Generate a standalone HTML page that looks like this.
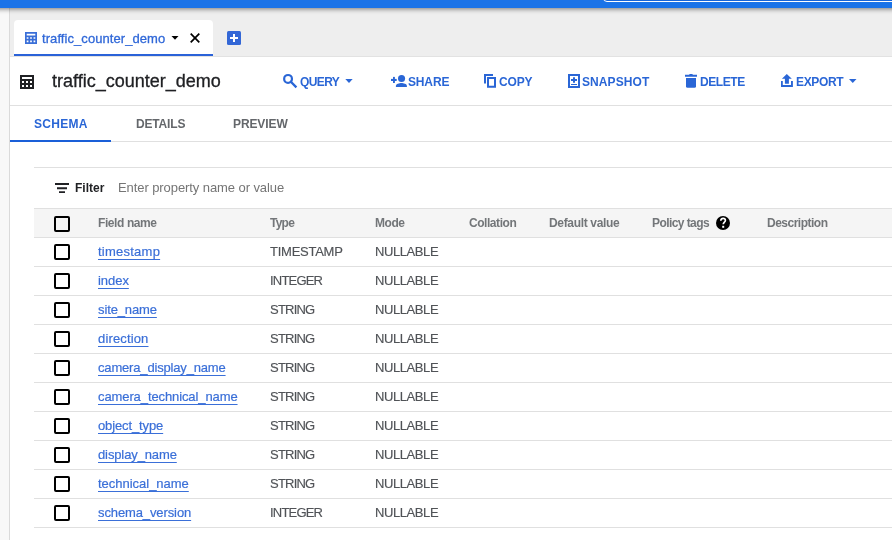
<!DOCTYPE html>
<html><head><meta charset="utf-8">
<style>
*{box-sizing:border-box;margin:0;padding:0}
html,body{width:892px;height:540px;overflow:hidden;background:#fff;font-family:"Liberation Sans",sans-serif;position:relative}
.t{will-change:transform}
.a{position:absolute}
.t{position:absolute;white-space:nowrap;line-height:1}
#topbar{left:-20px;top:0;width:940px;height:8px;background:#1a73e8;z-index:5;box-shadow:0 1px 5px rgba(0,0,0,.5)}
#search{left:623px;top:-30px;width:330px;height:32px;border:1px solid #fff;border-radius:4px;background:#1765d8}
#leftstrip{left:0;top:0;width:10px;height:540px;background:#f8f8f8;border-right:1px solid #dadada}
#tabbar{left:10px;top:8px;width:882px;height:49px;background:#eeeeee;border-bottom:1px solid #e2e2e2}
#tab{left:14px;top:20px;width:199px;height:36px;background:#fff;border-radius:4px 4px 0 0;border-bottom:2px solid #2a62d8}
.tabtxt{color:#3068d8;font-size:13px;-webkit-text-stroke:0.3px #3068d8;letter-spacing:0.07px}
.title{font-size:18px;color:#202124;-webkit-text-stroke:0.3px #202124}
.btn{color:#2a66d6;font-size:12px;font-weight:bold}
.hl{position:absolute;height:1px;background:#e0e0e0}
.stab{font-size:12px;font-weight:bold;color:#64676b}
.th{font-size:12px;font-weight:bold;color:#737679}
.cell{font-size:13px;color:#505357;-webkit-text-stroke:0.15px #505357}
.link{font-size:13px;color:#3a6fd8;text-decoration:underline;text-decoration-skip-ink:none;text-underline-offset:3px;-webkit-text-stroke:0.2px #3a6fd8}
.cb{position:absolute;width:16px;height:16px;border:2px solid #000;border-radius:2px}
svg{position:absolute;overflow:visible}
</style></head><body>
<div id="leftstrip" class="a"></div>
<div id="tabbar" class="a"></div>
<div id="topbar" class="a"><div id="search" class="a"></div></div>
<div id="tab" class="a"></div>

<svg style="left:25px;top:32px" width="12" height="12" viewBox="0 0 14 14"><path fill="#3a6fd8" fill-rule="evenodd" d="M0 0H14V14H0ZM2 2h10v2h-10ZM2 6h2v2h-2ZM6 6h2v2h-2ZM10 6h2v2h-2ZM2 10h2v2h-2ZM6 10h2v2h-2ZM10 10h2v2h-2Z"/></svg>
<div class="t tabtxt" style="left:42px;top:31.5px">traffic_counter_demo</div>
<svg style="left:171px;top:35.5px" width="8" height="4" viewBox="0 0 8 4"><path d="M0.5 0H7.5L4 3.8Z" fill="#000"/></svg>
<svg style="left:190px;top:33px" width="10" height="10" viewBox="0 0 10 10"><path d="M0.7 0.7L9.3 9.3M9.3 0.7L0.7 9.3" stroke="#000" stroke-width="1.7"/></svg>
<div class="a" style="left:227px;top:31px;width:14px;height:14px;background:#3367d6;border-radius:1.5px"></div>
<div class="a" style="left:230px;top:37px;width:8px;height:2px;background:#fff"></div>
<div class="a" style="left:233px;top:34px;width:2px;height:8px;background:#fff"></div>
<svg style="left:20px;top:75px" width="14" height="14" viewBox="0 0 14 14"><path fill="#202124" fill-rule="evenodd" d="M0 0H14V14H0ZM2 2h10v2h-10ZM2 6h2v2h-2ZM6 6h2v2h-2ZM10 6h2v2h-2ZM2 10h2v2h-2ZM6 10h2v2h-2ZM10 10h2v2h-2Z"/></svg>
<div class="t title" style="left:52px;top:71.5px">traffic_counter_demo</div>
<svg style="left:280px;top:70px" width="20" height="20" viewBox="0 0 20 20"><circle cx="8.05" cy="8.9" r="3.9" fill="none" stroke="#2a66d6" stroke-width="2.2"/><path d="M10.9 11.8L15.6 16.5" stroke="#2a66d6" stroke-width="2.3" stroke-linecap="square"/></svg>
<div class="t btn" style="left:299.5px;top:75.8px;letter-spacing:-0.6px">QUERY</div>
<svg style="left:345px;top:79px" width="8" height="4" viewBox="0 0 8 4"><path d="M0.3 0H7.7L4 4Z" fill="#2a66d6"/></svg>
<svg style="left:388px;top:70px" width="22" height="22" viewBox="0 0 22 22"><rect x="3" y="8.9" width="5.7" height="2.1" fill="#2a66d6"/><rect x="5" y="6.9" width="1.9" height="6.1" fill="#2a66d6"/><circle cx="13.55" cy="8.45" r="3.55" fill="#2a66d6"/><path d="M7.9 16.9V15.9C7.9 13.9 11.4 13 13.4 13C15.4 13 18.9 13.9 18.9 15.9V16.9Z" fill="#2a66d6"/></svg>
<div class="t btn" style="left:407.5px;top:75.8px;letter-spacing:-0.15px">SHARE</div>
<svg style="left:484px;top:74px" width="12" height="14" viewBox="0 0 12 14"><path fill="#2a66d6" d="M0 0H9V2H2V9.5H0Z"/><path fill="#2a66d6" fill-rule="evenodd" d="M3 3H12V13.7H3ZM5 5V11.7H10V5Z"/></svg>
<div class="t btn" style="left:499.4px;top:75.8px;letter-spacing:-0.13px">COPY</div>
<svg style="left:568px;top:74px" width="12" height="14" viewBox="0 0 12 14"><path fill="#2a66d6" fill-rule="evenodd" d="M0 0H12V14H0ZM2 2V12H10V2Z"/><path fill="#2a66d6" d="M5 3.2H7V5H9V7H7V8.8H5V7H3V5H5Z"/><rect x="3" y="10" width="6" height="1" fill="#2a66d6"/></svg>
<div class="t btn" style="left:582.2px;top:75.8px;letter-spacing:0.08px">SNAPSHOT</div>
<svg style="left:680px;top:70px" width="20" height="20" viewBox="0 0 20 20"><path fill="#2a66d6" d="M5 4.8H9L9.8 3.9H12.2L13 4.8H17V6.8H5Z"/><path fill="#2a66d6" d="M6 7.9H16V16.3Q16 17.8 14.5 17.8H7.5Q6 17.8 6 16.3Z"/></svg>
<div class="t btn" style="left:699.6px;top:75.8px;letter-spacing:-0.44px">DELETE</div>
<svg style="left:781px;top:74px" width="12" height="13" viewBox="0 0 12 13"><path fill="#2a66d6" d="M5.8 0L10.8 4.8H7.9V9.8H3.9V4.8H0.9Z"/><path fill="#2a66d6" d="M0 7H1.8V11H10V7H11.9V12.9H0Z"/></svg>
<div class="t btn" style="left:795.6px;top:75.8px;letter-spacing:-0.34px">EXPORT</div>
<svg style="left:849.4px;top:79px" width="8" height="4" viewBox="0 0 8 4"><path d="M0 0H7.5L3.75 4Z" fill="#2a66d6"/></svg>
<div class="hl" style="left:10px;top:105px;width:882px"></div>
<div class="t stab" style="left:34.3px;top:117.5px;color:#2a66d6;letter-spacing:0.3px">SCHEMA</div>
<div class="t stab" style="left:135.8px;top:117.5px;letter-spacing:-0.17px">DETAILS</div>
<div class="t stab" style="left:233.4px;top:117.5px;letter-spacing:-0.1px">PREVIEW</div>
<div class="hl" style="left:10px;top:141px;width:882px"></div>
<div class="a" style="left:10px;top:140px;width:101px;height:2px;background:#1a5fd8"></div>
<div class="hl" style="left:34px;top:167px;width:858px"></div>
<svg style="left:55px;top:183px" width="14" height="10" viewBox="0 0 14 10"><path fill="#202124" d="M0 0H14V2H0ZM2 4.3H12V6.3H2ZM4 8.3H10V10H4Z"/></svg>
<div class="t" style="left:74.9px;top:182px;font-size:12px;font-weight:bold;color:#202124">Filter</div>
<div class="t" style="left:117.9px;top:181px;font-size:13px;color:#757575;letter-spacing:-0.08px">Enter property name or value</div>
<div class="a" style="left:34px;top:208px;width:858px;height:30px;background:#f5f5f5;border-top:1px solid #e0e0e0;border-bottom:1px solid #e0e0e0"></div>
<div class="cb" style="left:54px;top:216px"></div>
<div class="t th" style="left:97.60000000000001px;top:216.6px;letter-spacing:-0.41px">Field name</div>
<div class="t th" style="left:270.0px;top:216.6px;letter-spacing:-0.77px">Type</div>
<div class="t th" style="left:374.9px;top:216.6px;letter-spacing:-0.47px">Mode</div>
<div class="t th" style="left:469.3px;top:216.6px;letter-spacing:-0.45px">Collation</div>
<div class="t th" style="left:549.0px;top:216.6px;letter-spacing:-0.33px">Default value</div>
<div class="t th" style="left:651.5px;top:216.6px;letter-spacing:-0.57px">Policy tags</div>
<div class="t th" style="left:767.0px;top:216.6px;letter-spacing:-0.5px">Description</div>
<svg style="left:714px;top:214px" width="18" height="18" viewBox="0 0 18 18"><circle cx="9" cy="9" r="7" fill="#000"/><path d="M6.8 6.7C6.8 5.2 7.9 4.3 9.1 4.3C10.4 4.3 11.4 5.2 11.4 6.4C11.4 7.9 9.2 8.3 9.2 10.3" stroke="#fff" stroke-width="1.65" fill="none"/><rect x="8.2" y="11.8" width="2" height="2" fill="#fff"/></svg>
<div class="hl" style="left:34px;top:266px;width:858px"></div>
<div class="cb" style="left:54px;top:244px"></div>
<div class="t link" style="left:98px;top:245px;letter-spacing:0.24px">timestamp</div>
<div class="t cell" style="left:269.6px;top:245px;letter-spacing:-0.25px">TIMESTAMP</div>
<div class="t cell" style="left:374.5px;top:245px;letter-spacing:-0.41px">NULLABLE</div>
<div class="hl" style="left:34px;top:295px;width:858px"></div>
<div class="cb" style="left:54px;top:273px"></div>
<div class="t link" style="left:98px;top:274px;letter-spacing:-0.05px">index</div>
<div class="t cell" style="left:269.6px;top:274px;letter-spacing:-0.8px">INTEGER</div>
<div class="t cell" style="left:374.5px;top:274px;letter-spacing:-0.41px">NULLABLE</div>
<div class="hl" style="left:34px;top:324px;width:858px"></div>
<div class="cb" style="left:54px;top:302px"></div>
<div class="t link" style="left:98px;top:303px;letter-spacing:-0.125px">site_name</div>
<div class="t cell" style="left:269.6px;top:303px;letter-spacing:-0.78px">STRING</div>
<div class="t cell" style="left:374.5px;top:303px;letter-spacing:-0.41px">NULLABLE</div>
<div class="hl" style="left:34px;top:353px;width:858px"></div>
<div class="cb" style="left:54px;top:331px"></div>
<div class="t link" style="left:98px;top:332px;letter-spacing:0.15px">direction</div>
<div class="t cell" style="left:269.6px;top:332px;letter-spacing:-0.78px">STRING</div>
<div class="t cell" style="left:374.5px;top:332px;letter-spacing:-0.41px">NULLABLE</div>
<div class="hl" style="left:34px;top:382px;width:858px"></div>
<div class="cb" style="left:54px;top:360px"></div>
<div class="t link" style="left:98px;top:361px;letter-spacing:-0.17px">camera_display_name</div>
<div class="t cell" style="left:269.6px;top:361px;letter-spacing:-0.78px">STRING</div>
<div class="t cell" style="left:374.5px;top:361px;letter-spacing:-0.41px">NULLABLE</div>
<div class="hl" style="left:34px;top:411px;width:858px"></div>
<div class="cb" style="left:54px;top:389px"></div>
<div class="t link" style="left:98px;top:390px;letter-spacing:-0.1px">camera_technical_name</div>
<div class="t cell" style="left:269.6px;top:390px;letter-spacing:-0.78px">STRING</div>
<div class="t cell" style="left:374.5px;top:390px;letter-spacing:-0.41px">NULLABLE</div>
<div class="hl" style="left:34px;top:440px;width:858px"></div>
<div class="cb" style="left:54px;top:418px"></div>
<div class="t link" style="left:98px;top:419px;letter-spacing:-0.12px">object_type</div>
<div class="t cell" style="left:269.6px;top:419px;letter-spacing:-0.78px">STRING</div>
<div class="t cell" style="left:374.5px;top:419px;letter-spacing:-0.41px">NULLABLE</div>
<div class="hl" style="left:34px;top:469px;width:858px"></div>
<div class="cb" style="left:54px;top:447px"></div>
<div class="t link" style="left:98px;top:448px;letter-spacing:-0.12px">display_name</div>
<div class="t cell" style="left:269.6px;top:448px;letter-spacing:-0.78px">STRING</div>
<div class="t cell" style="left:374.5px;top:448px;letter-spacing:-0.41px">NULLABLE</div>
<div class="hl" style="left:34px;top:498px;width:858px"></div>
<div class="cb" style="left:54px;top:476px"></div>
<div class="t link" style="left:98px;top:477px;letter-spacing:-0.02px">technical_name</div>
<div class="t cell" style="left:269.6px;top:477px;letter-spacing:-0.78px">STRING</div>
<div class="t cell" style="left:374.5px;top:477px;letter-spacing:-0.41px">NULLABLE</div>
<div class="hl" style="left:34px;top:527px;width:858px"></div>
<div class="cb" style="left:54px;top:505px"></div>
<div class="t link" style="left:98px;top:506px;letter-spacing:-0.11px">schema_version</div>
<div class="t cell" style="left:269.6px;top:506px;letter-spacing:-0.8px">INTEGER</div>
<div class="t cell" style="left:374.5px;top:506px;letter-spacing:-0.41px">NULLABLE</div>
</body></html>
